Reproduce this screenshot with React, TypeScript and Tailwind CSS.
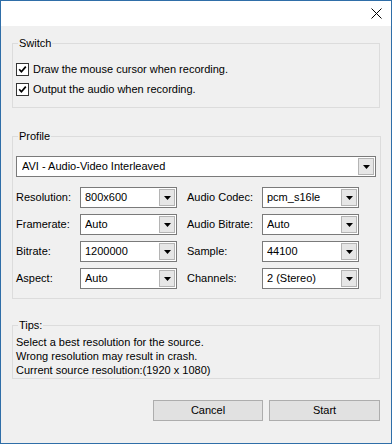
import React from 'react';

const font = { fontFamily: '"Liberation Sans", Arial, sans-serif' };

function Combo({ value, className = '' }: { value: string; className?: string }) {
  return (
    <div className={`flex h-[21px] items-center border border-[#7a7a7a] bg-white pl-[4px] pr-[1px] ${className}`}>
      <span className="flex-1 truncate leading-none">{value}</span>
      <span className="flex h-[17px] w-[16px] items-center justify-center border border-[#b4b4b4] bg-[#e6e6e6]">
        <svg width="7" height="4" viewBox="0 0 7 4">
          <path d="M0 0h7L3.5 4z" fill="#000" />
        </svg>
      </span>
    </div>
  );
}

function Check({ label }: { label: string }) {
  return (
    <div className="flex h-[20px] items-center gap-[4px]">
      <span className="flex h-[13px] w-[13px] items-center justify-center border border-[#333] bg-white">
        <svg width="9" height="9" viewBox="0 0 9 9">
          <path d="M1.2 4.3l2.2 2.5L7.8 1.6" stroke="#000" strokeWidth="1.7" fill="none" />
        </svg>
      </span>
      <span>{label}</span>
    </div>
  );
}

function Group({ title, className = '', children }: { title: string; className?: string; children: React.ReactNode }) {
  return (
    <fieldset className={`mx-[11px] border border-[#dcdcdc] pl-[3px] pr-[4px] ${className}`}>
      <legend className="ml-[2px] px-[1px] leading-[15px]">{title}</legend>
      {children}
    </fieldset>
  );
}

const rows: [string, string, string, string][] = [
  ['Resolution:', '800x600', 'Audio Codec:', 'pcm_s16le'],
  ['Framerate:', 'Auto', 'Audio Bitrate:', 'Auto'],
  ['Bitrate:', '1200000', 'Sample:', '44100'],
  ['Aspect:', 'Auto', 'Channels:', '2 (Stereo)'],
];

export default function App() {
  return (
    <div
      className="flex h-[444px] w-[392px] flex-col border border-[#2f6ea8] bg-[#f0f0f0] text-[11px] text-black"
      style={font}
    >
      <div className="flex h-[25px] items-center justify-end bg-white pr-[9px]">
        <svg width="11" height="11" viewBox="0 0 11 11">
          <path d="M0.5 0.5l10 10M10.5 0.5l-10 10" stroke="#000" strokeWidth="1" />
        </svg>
      </div>

      <Group title="Switch" className="mt-[10px] pt-[8px] pb-[8px]">
        <Check label="Draw the mouse cursor when recording." />
        <Check label="Output the audio when recording." />
      </Group>

      <Group title="Profile" className="mt-[21px] pt-[12px] pb-[9px]">
        <Combo value="AVI - Audio-Video Interleaved" className="w-[360px] pl-[5px]" />
        <div className="mt-[10px] flex flex-col gap-[6px]">
          {rows.map(([l1, v1, l2, v2]) => (
            <div key={l1} className="flex items-center">
              <span className="w-[64px]">{l1}</span>
              <Combo value={v1} className="w-[97px]" />
              <span className="ml-[10px] w-[75px]">{l2}</span>
              <Combo value={v2} className="w-[97px]" />
            </div>
          ))}
        </div>
      </Group>

      <Group title="Tips:" className="mt-[19px] pt-[2px] pb-[1px]">
        <div className="leading-[14px]">
          <div>Select a best resolution for the source.</div>
          <div>Wrong resolution may result in crash.</div>
          <div>Current source resolution:(1920 x 1080)</div>
        </div>
      </Group>

      <div className="mt-[21px] flex justify-end gap-[6px] pr-[11px]">
        <button className="h-[21px] w-[110px] border border-[#adadad] bg-[#e1e1e1]">Cancel</button>
        <button className="h-[21px] w-[111px] border border-[#adadad] bg-[#e1e1e1]">Start</button>
      </div>
    </div>
  );
}
